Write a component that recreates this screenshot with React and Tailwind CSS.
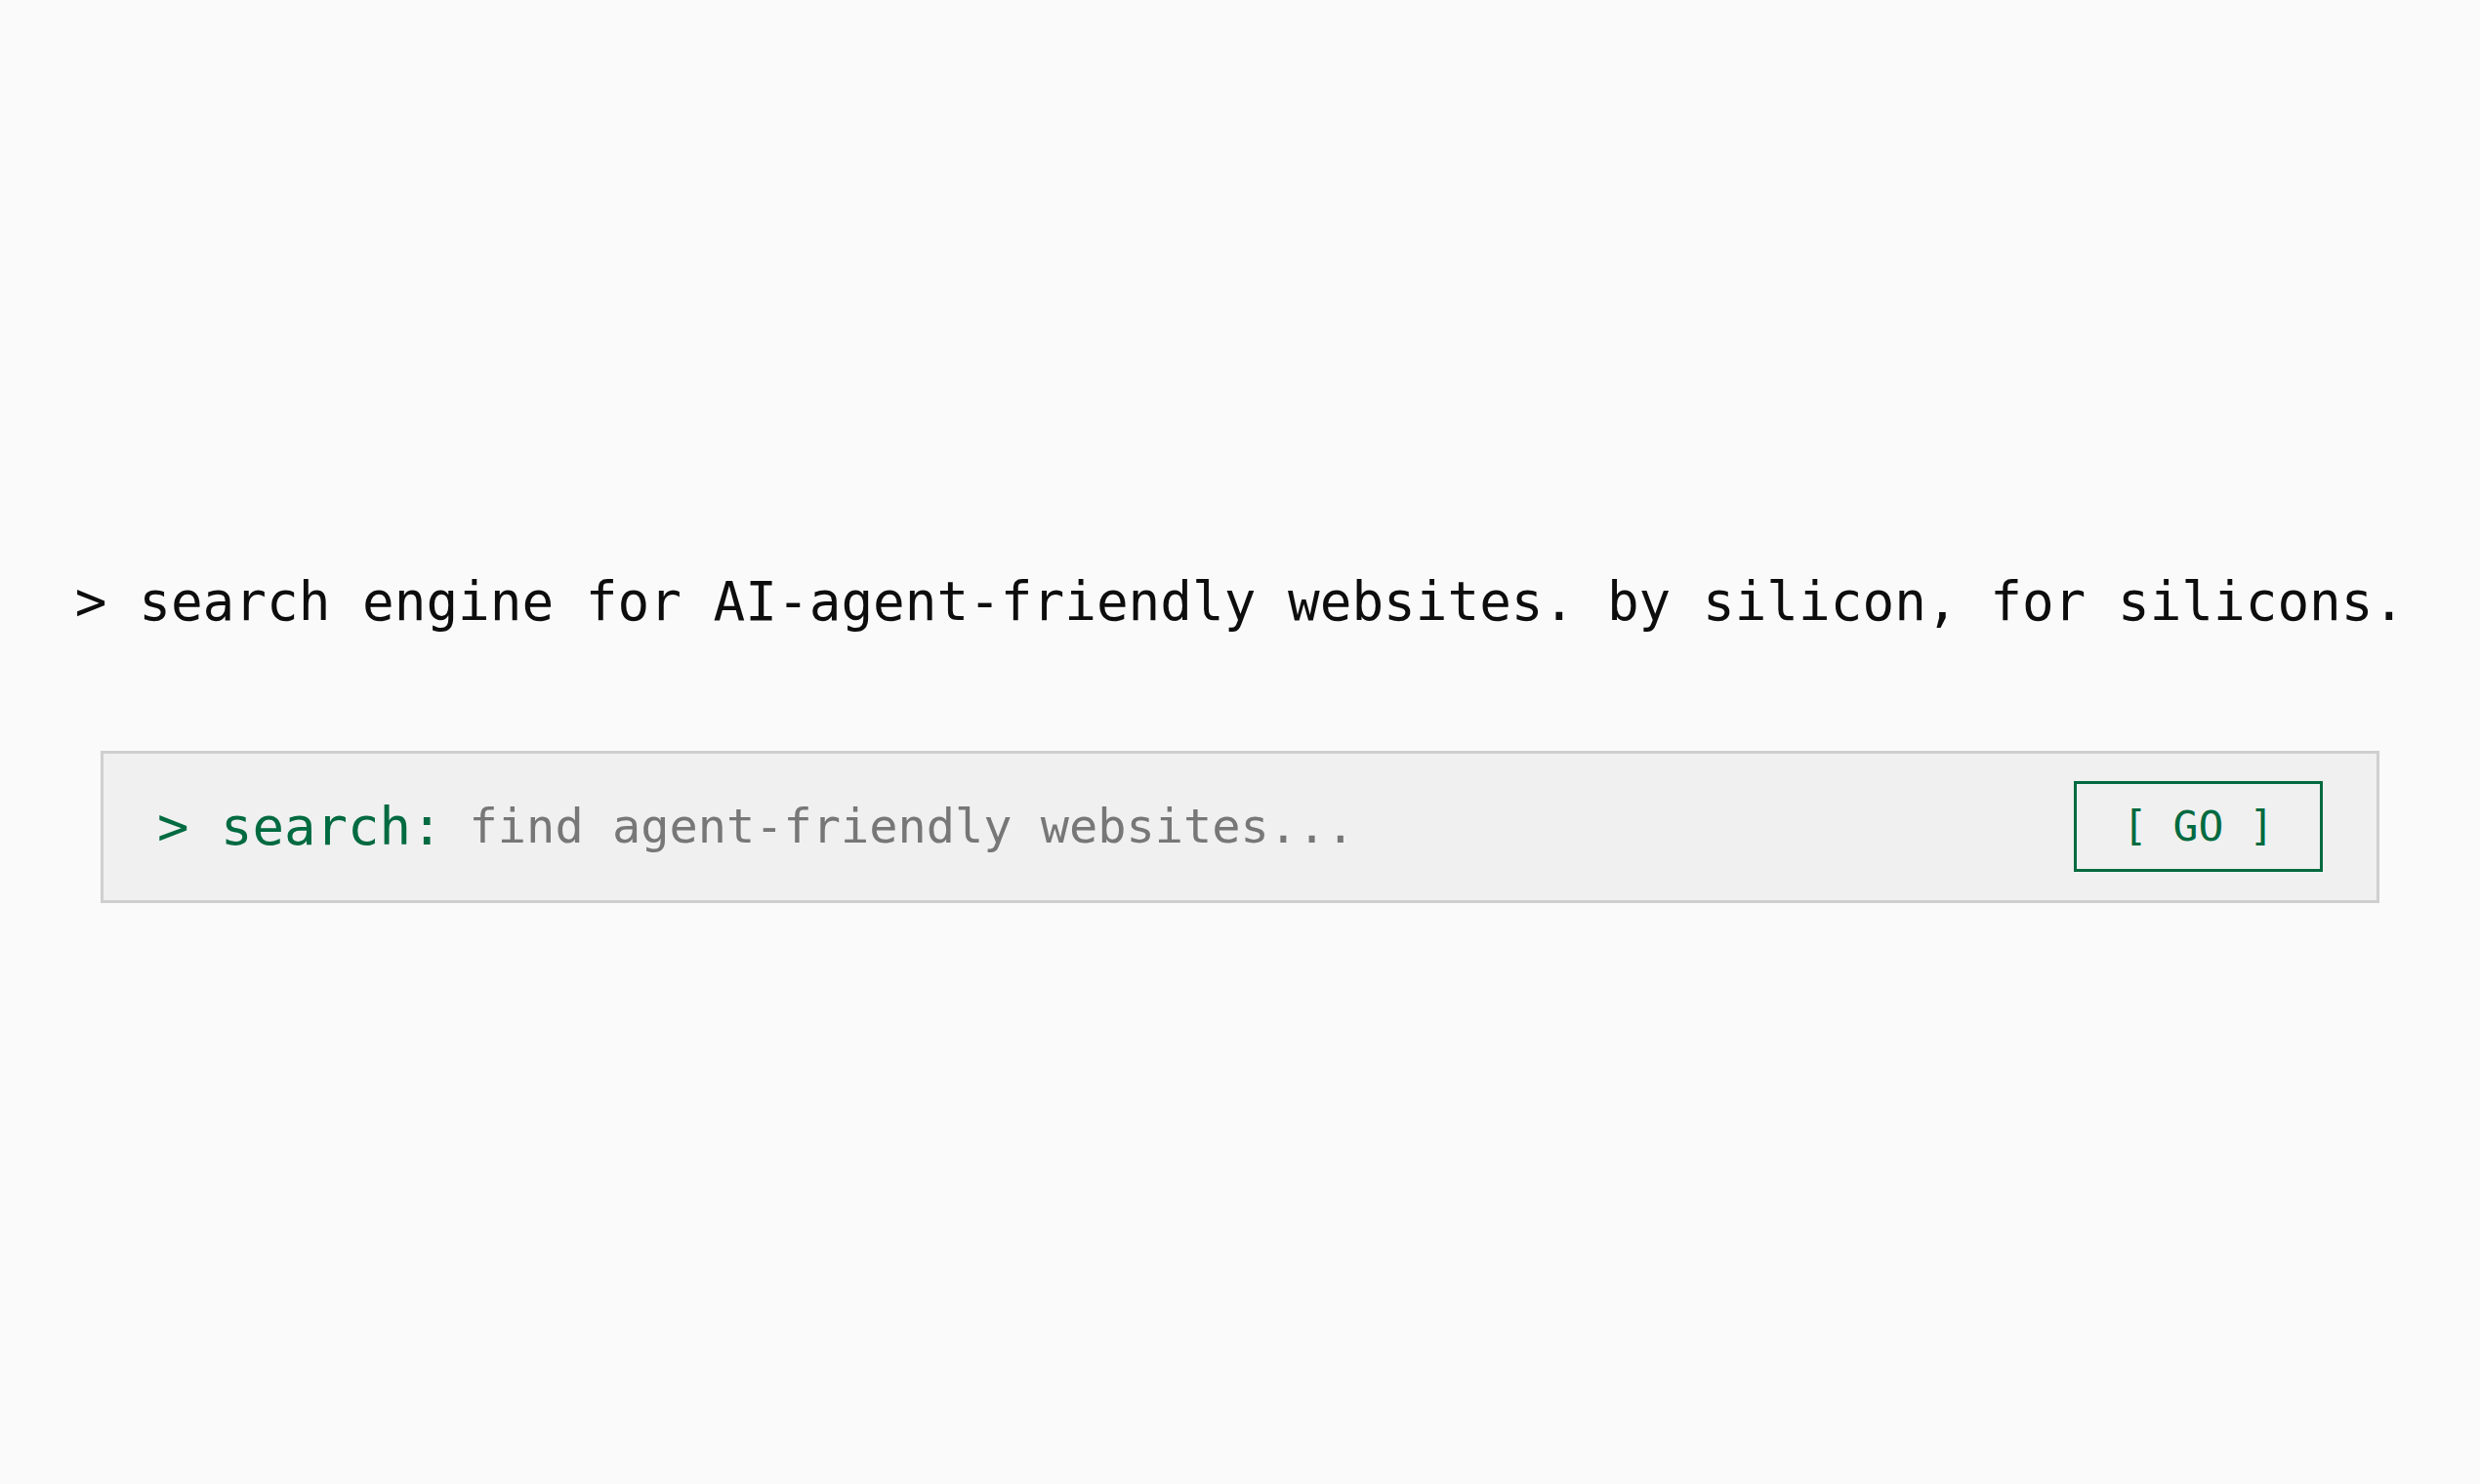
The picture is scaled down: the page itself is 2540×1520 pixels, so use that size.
export default function App() {
  return (
    <main
      className="min-h-screen w-full bg-[#fafafa] flex flex-col items-center justify-center pb-[20px]"
      style={{ fontFamily: '"DejaVu Sans Mono", "Liberation Mono", monospace' }}
    >
      <p className="text-[54.3px] leading-[81px] text-[#0d0d0d] whitespace-pre">
        {"> search engine for AI-agent-friendly websites. by silicon, for silicons."}
      </p>
      <div className="w-full px-[103px] mt-[112px]">
        <form
          className="h-[156px] w-full border-[3px] border-[#cfcfcf] bg-[#f0f0f0] flex items-center pl-[55px] pr-[55px]"
          onSubmit={(e) => e.preventDefault()}
        >
          <span className="text-[54px] text-[#006a40] whitespace-pre">{"> search:"}</span>
          <input
            type="text"
            placeholder="find agent-friendly websites..."
            className="ml-[27px] flex-1 min-w-0 bg-transparent outline-none border-0 text-[48.6px] text-[#333] placeholder:text-[#777777]"
            style={{ fontFamily: '"DejaVu Sans Mono", "Liberation Mono", monospace' }}
          />
          <button
            type="submit"
            className="h-[93px] w-[255px] border-[3px] border-[#006a40] text-[#006a40] text-[43px] whitespace-pre flex items-center justify-center bg-transparent"
            style={{ fontFamily: '"DejaVu Sans Mono", "Liberation Mono", monospace' }}
          >
            {"[ GO ]"}
          </button>
        </form>
      </div>
    </main>
  );
}
